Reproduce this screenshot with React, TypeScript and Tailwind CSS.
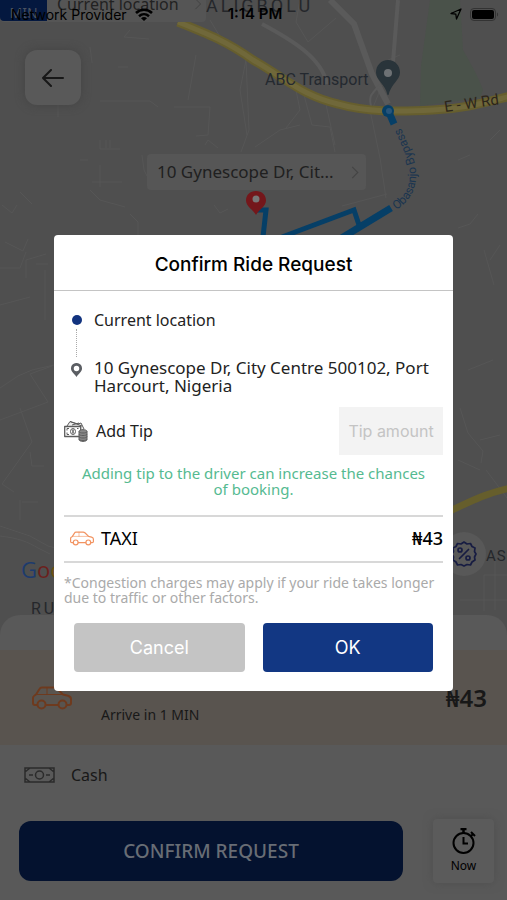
import React from "react";

const body = "font-['Noto_Sans',sans-serif]";

function CarIcon({ className }: { className: string }) {
  return (
    <svg viewBox="0 0 40 24" className={className} fill="none" stroke="currentColor" strokeWidth="2" strokeLinecap="round" strokeLinejoin="round" aria-hidden="true">
      <path d="M5 19H3c-1 0-2-1-2-2v-5c0-1 .6-2 1.500-2.500L4 8.500 7.500 3C8 2 9 1.500 10 1.500h12c1 0 2 .4 2.800 1L31 8.500l5 1.200c2 .6 3 1.800 3 3.300V17c0 1-1 2-2 2h-2" />
      <path d="M14 19h12" />
      <path d="M4 8.500h27M15 1.500v7" strokeWidth="1" />
      <circle cx="9.500" cy="18.500" r="4" />
      <circle cx="30.500" cy="18.500" r="4" />
    </svg>
  );
}

function TipIcon() {
  return (
    <svg viewBox="0 0 24 22" className="h-[22px] w-6" fill="none" stroke="#5c5c5c" strokeWidth="1" strokeLinejoin="round" aria-hidden="true">
      <path d="M3 6 6 1.500 14 4l3-1 3 6" fill="#eee" />
      <path d="M6 1.500 18 6M8 5l7-2" />
      <rect x=".7" y="6.500" width="16" height="10" fill="#fff" strokeWidth="1.300" />
      <path d="M3 8.500h2M3 14.500h2M3 8.500v2M3 14.500v-2M13 8.500h1.500" />
      <ellipse cx="9" cy="11.500" rx="2.500" ry="3" />
      <path d="M9 9.500v4" strokeWidth="1.500" />
      <path d="M15 11.500c0-2.500 8-2.500 8 0v8c0 2.500-8 2.500-8 0z" fill="#888" />
      <path d="M15 11.500c0 2 8 2 8 0M15 14c0 2 8 2 8 0M15 16.500c0 2 8 2 8 0M15 19c0 2 8 2 8 0" />
    </svg>
  );
}

function CityMap() {
  return (
    <svg viewBox="0 0 507 680" preserveAspectRatio="xMidYMin slice" className="absolute inset-0 h-full w-full" fill="none" aria-hidden="true">
      <rect width="507" height="680" fill="#4f4f4f" />
      <path d="M430 0h30l3 50c8 14 16 28 20 40l-3 8-60 8 1-40z" fill="#4a524a" />
      <g stroke="#565656" strokeWidth="1">
        <path d="M130 30l-6 7 25 2M90 47l2 16M118 67h10M100 101h50l8 6M174 107h36l-2 28-12 1M188 100l8-45M210 20l15 25M58 105v12M100 140v9h20M106 140v8M110 140v8M80 160h8M100 165v22M92 182h30M90 190l10 10 25 7M20 192l12 12M2 205l10 8 5-8M130 214l8 8v14M142 155l2 15 3 6M205 145l3-5 10 8M214 205l6 8 8-4M246 60l3 70-8 22M246 60l-6 30 7 45" />
        <path d="M300 0l-4 22 12 20 28-24M296 90l4 20-14 18M304 95l8 30 18 2 5 25M325 100l10 45M255 147l25-17 20-5M370 110l10 48 6 40M382 85l-12 30M342 206l45-12M400 55l-12 5M470 155l-12 5M500 130l-10 10M478 214l-8 10-12 4M500 245l-10 15M484 250l10 35" />
        <path d="M5 242l18 9 5-12M0 268h20l6-16M26 278v-18l20-6M36 264h12M45 270v50M0 305l30-8M0 388l18-12 14-6 22-5M0 420l48-18-18-28 22-8M20 408l12 34-30 42 12 8M30 452l2 14h12M0 526l30 10 18 10 8 2M22 502h16M20 500v20M0 536c18 2 28 6 38 12l12 6" />
        <path d="M460 408l8 25 15 18-2 12M480 440l20-5M458 460l22 10M486 470l21 28M484 575h23M484 575v36M460 600h47M495 560v50M468 370l25-10" />
      </g>
      <g stroke="#5a5a5a">
        <path d="M330 0l24 24 18 50 16 30" strokeWidth="6" />
        <path d="M262 24c30 16 60 34 65 60M398 0l-5 62" strokeWidth="4" />
        <path d="M380 85c-10 10-12 12-8 25" strokeWidth="2" />
      </g>
      <path d="M178 22c30 12 50 20 75 38 35 20 50 36 85 44 28 8 60 8 95 6 30-1 50-7 78-14" stroke="#665e2e" strokeWidth="9" />
      <path d="M178 22c30 12 50 20 75 38 35 20 50 36 85 44 28 8 60 8 95 6 30-1 50-7 78-14" stroke="#70683a" strokeWidth="5" />
      <path d="M450 511c25-12 35-17 60-23" stroke="#665e2c" strokeWidth="7" />
      <g stroke="#063f67" strokeWidth="5">
        <path d="M263 237l3-27h-9" />
        <path d="M282 237l72-27 5 15" />
        <path d="M335 242l56-34" strokeWidth="7" />
        <path d="M388 110l6 14" strokeWidth="7" />
      </g>
      <circle cx="388" cy="111" r="6" fill="#063f67" />
      <circle cx="389" cy="111" r="3" fill="#28557a" />
      <path d="M388 60c-7 0-12 5.500-12 12.500 0 8 9 11 11.500 22.500h1C391 84 400 80 400 72.500 400 65.500 395 60 388 60z" fill="#29343a" />
      <circle cx="388" cy="73" r="4" fill="#6d7174" />
      <path d="M256 191c-6 0-10 4-10 9.500 0 6 7 9 10 14.500 3-5.500 10-8.500 10-14.500 0-5.500-4-9.500-10-9.500z" fill="#74171b" />
      <circle cx="256" cy="199" r="3.500" fill="#777" />
      <path id="bypass" d="M396 210C414 199 420 180 414 160 409 145 404 136 399 123" />
      <g className="font-['Roboto',sans-serif]" fill="#24292f">
        <text x="265" y="85" fontSize="16">ABC Transport</text>
        <text x="445" y="112" fontSize="15" fill="#2c251b" transform="rotate(-8 445 112)">E - W Rd</text>
        <text fontSize="12" fill="#1b3550"><textPath href="#bypass">Obasanjo Bypass</textPath></text>
        <text x="206" y="12" fontSize="18" fill="#25272b" className="tracking-[3px]">ALIGBOLU</text>
        <text x="31" y="614" fontSize="16" fill="#25272b" className="tracking-[3px]">RU</text>
        <text x="486" y="561" fontSize="15" fill="#25272b" className="tracking-[1px]">AS</text>
      </g>
      <text x="21" y="578" fontSize="22" fontWeight="500" className="font-['Open_Sans',sans-serif]">
        <tspan fill="#1d3b6d">G</tspan><tspan fill="#6b211d">o</tspan><tspan fill="#6f5110">o</tspan>
      </text>
    </svg>
  );
}

function StatusBar() {
  return (
    <header className="absolute inset-x-0 top-0 flex h-7 items-center pr-2 pl-[11px] font-['Inter',sans-serif] text-black">
      <div className="flex flex-1 items-center gap-2">
        <span className="text-[14px]">Network Provider</span>
        <svg viewBox="0 0 18 13" className="h-[13px] w-[18px]" fill="none" stroke="currentColor" strokeWidth="2.500" aria-label="Wi-Fi">
          <path d="M1 5c4.500-4.500 11.500-4.500 16 0M4 8.200c3-2.600 7-2.600 10 0" />
          <path d="M6 10.200c2-1.500 4-1.500 6 0L9 13z" fill="currentColor" stroke="none" />
        </svg>
      </div>
      <span className="text-[15px] font-semibold">1:14 PM</span>
      <div className="flex flex-1 items-center justify-end gap-2">
        <svg viewBox="0 0 12 12" className="h-3 w-3" fill="none" stroke="currentColor" strokeWidth="1.300" strokeLinejoin="round" aria-label="Location in use">
          <path d="M11 1 1 5.500l4.800.7L6.500 11z" />
        </svg>
        <svg viewBox="0 0 29 13" className="h-[13px] w-[29px]" aria-label="Battery full">
          <rect x=".5" y=".5" width="25" height="12" rx="3.500" fill="none" stroke="#333" />
          <rect x="2" y="2" width="22" height="9" rx="2" fill="#000" />
          <path d="M27 4.500c1.500.5 1.500 3.500 0 4z" fill="#333" />
        </svg>
      </div>
    </header>
  );
}

function MapArea() {
  return (
    <section className="relative flex-1 overflow-hidden bg-[#4f4f4f]" aria-label="Map">
      <CityMap />
      <div className="absolute top-0 left-0 flex h-[22px] w-[206px] items-end rounded-b bg-[#555555]">
        <span className="mb-px flex h-[21px] w-[47px] items-end justify-center rounded-bl bg-[#04183f] text-[14px] leading-4 text-[#4a5260]">MIN</span>
        <span className="flex-1 pl-[10px] text-[16px] leading-9 text-[#222]">Current location</span>
        <svg viewBox="0 0 8 14" className="mr-1 mb-3 h-3 w-2" fill="none" stroke="#3f3f3f" aria-hidden="true"><path d="m1 1 6 6-6 6" /></svg>
      </div>
      <button aria-label="Back" className="absolute top-[50px] left-[25px] flex h-[55px] w-14 items-center justify-center rounded-xl bg-[#595959] shadow-[0_0_10px_#444]">
        <svg viewBox="0 0 22 18" className="h-[18px] w-[22px]" fill="none" stroke="#181818" strokeWidth="2" strokeLinecap="round" strokeLinejoin="round"><path d="M21 9H1M9 1 1 9l8 8" /></svg>
      </button>
      <button className="absolute top-[154px] left-[147px] flex h-9 w-[219px] items-center justify-between rounded bg-[#565656] pr-[7px] pl-[10px] text-[17px] text-[#202020]">
        10 Gynescope Dr, Cit...
        <svg viewBox="0 0 8 14" className="h-[13px] w-2" fill="none" stroke="#444" strokeWidth="1.200" aria-hidden="true"><path d="m1 1 6 6-6 6" /></svg>
      </button>
      <button aria-label="Offers" className="absolute top-[532px] right-[21px] flex h-11 w-11 items-center justify-center rounded-full bg-[#585858]">
        <svg viewBox="0 0 26 26" className="h-[26px] w-[26px]" fill="none" stroke="#171c42" strokeWidth="1.700" strokeLinecap="round" strokeLinejoin="round">
          <path d="m13 1 3 2 3.500-.5 1.500 3 3 1.500-.5 3.500L25 13l-1.500 3 .5 3-3 2-1.500 3-3.500-.5L13 25l-3-1.500-3.500.5L5 21l-3-2 .5-3L1 13l1.500-2.500L2 7l3-1.500 1.500-3L10 3z" />
          <path d="m17.500 8.500-9 9" /><circle cx="9" cy="9" r="2" /><circle cx="17" cy="17" r="2" />
        </svg>
      </button>
    </section>
  );
}

function BookingSheet() {
  return (
    <section className="relative -mt-5 rounded-t-[20px] bg-[#595959] pt-[35px] text-[#181818]">
      <div className="flex h-[95px] items-center bg-[#59544f] pr-5 pl-8">
        <CarIcon className="h-6 w-10 text-[#6e3a1e]" />
        <div className="flex-1 self-end pb-5 pl-[29px] text-[14px] leading-5">Arrive in 1 MIN</div>
        <strong className="text-[24px] font-semibold">₦43</strong>
      </div>
      <div className="flex h-[60px] items-center gap-4 px-6">
        <svg viewBox="0 0 31 16" className="h-4 w-[31px]" fill="none" stroke="#2b2b2b" strokeWidth="1.500" aria-hidden="true">
          <path d="M1 1h29v14H1zM1 5l5-4M1 11l5 4M30 5l-5-4M30 11l-5 4M5 8h4M22 8h4" /><circle cx="15.500" cy="8" r="4" />
        </svg>
        <span className="text-[16px]">Cash</span>
      </div>
      <div className="flex items-center gap-[30px] pt-2 pr-[13px] pb-[11px] pl-[19px]">
        <button className="mt-2 mb-2 h-[60px] flex-1 rounded-xl bg-[#04122f] text-[19px] font-medium text-[#686d75]">CONFIRM REQUEST</button>
        <button className="flex h-16 w-[61px] flex-col items-center justify-center gap-1 rounded bg-[#5b5b5b] text-black shadow-[0_0_10px_#4f4f4f]">
          <svg viewBox="0 0 24 26" className="h-[26px] w-6" fill="none" stroke="currentColor" strokeWidth="2" aria-hidden="true">
            <circle cx="11.500" cy="15" r="10" /><path d="M11.500 9v6.500H16" /><path d="M8.500 1h6M11.500 1v4" strokeWidth="2.500" /><path d="m19 4 4 4M19 8l2.500-2.500" />
          </svg>
          <span className="text-[12px] leading-4">Now</span>
        </button>
      </div>
    </section>
  );
}

function ConfirmDialog() {
  return (
    <div className="absolute inset-0 flex items-center justify-center px-[54px] pt-[25px]">
      <div role="dialog" aria-modal="true" aria-labelledby="dialog-title" className="w-full max-w-[399px] rounded bg-white text-[#222]">
        <h1 id="dialog-title" className="border-b border-[#c4c4c4] pt-4 pb-[11px] text-center font-['Inter',sans-serif] text-[19px] leading-7 font-medium text-black">Confirm Ride Request</h1>
        <div className="px-[10px] pb-[19px]">
          <div className="flex pt-5 pl-[6px]">
            <div className="flex w-[13px] flex-col items-center pt-1" aria-hidden="true">
              <span className="h-[10px] w-[10px] rounded-full bg-[#12337f]" />
              <span className="my-1 h-7 border-l border-dotted border-[#aaa]" />
              <svg viewBox="0 0 11 14" className="mt-[2px] h-[14px] w-[11px]"><path d="M5.500 0A5.300 5.300 0 0 0 0 5.500C0 9 3.500 10.500 5.500 14 7.500 10.500 11 9 11 5.500A5.300 5.300 0 0 0 5.500 0zm0 2.700a2.700 2.700 0 1 1 0 5.500 2.700 2.700 0 0 1 0-5.500z" fill="#5b5e63" fillRule="evenodd" /></svg>
            </div>
            <div className="flex flex-1 flex-col gap-[30px] pl-[11px]">
              <p className="text-[16px] leading-[18px]">Current location</p>
              <p className="text-[17px] leading-[18px]">10 Gynescope Dr, City Centre 500102, Port Harcourt, Nigeria</p>
            </div>
          </div>
          <div className="mt-3 flex h-12 items-center">
            <TipIcon />
            <label htmlFor="tip" className="flex-1 pl-2 text-[16px]">Add Tip</label>
            <input id="tip" inputMode="decimal" placeholder="Tip amount" className="h-12 w-[104px] bg-[#f3f3f3] text-center font-['Inter',sans-serif] text-[16px] outline-none placeholder:text-[#c4c4c4]" />
          </div>
          <p className="mt-[10px] px-3 text-center text-[15px] leading-4 text-[#55ba91]">Adding tip to the driver can increase the chances of booking.</p>
          <div className="mt-[18px] flex h-12 items-center border-t-2 border-b-2 border-[#d8d8d8] pl-[6px] text-black">
            <CarIcon className="h-[15px] w-6 text-[#f29361]" />
            <span className="flex-1 pl-[7px] text-[18px]">TAXI</span>
            <span className="text-[18px] font-medium">₦43</span>
          </div>
          <p className="mt-3 text-[14px] leading-[15px] text-[#aaa]">*Congestion charges may apply if your ride takes longer due to traffic or other factors.</p>
          <div className="mt-[18px] flex gap-[18px] px-[10px] font-['Inter',sans-serif] text-[18px] text-white">
            <button className="h-[49px] flex-1 rounded bg-[#c4c4c4]">Cancel</button>
            <button className="h-[49px] flex-1 rounded bg-[#123783]">OK</button>
          </div>
        </div>
      </div>
    </div>
  );
}

export default function App() {
  return (
    <main className={`relative flex min-h-screen flex-col bg-[#595959] ${body}`}>
      <MapArea />
      <BookingSheet />
      <StatusBar />
      <ConfirmDialog />
    </main>
  );
}
